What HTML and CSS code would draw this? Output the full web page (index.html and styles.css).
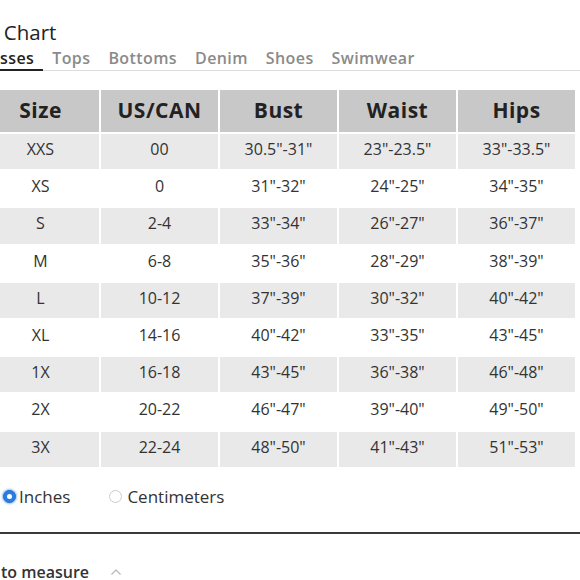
FILE: index.html
```html
<!DOCTYPE html>
<html>
<head>
<meta charset="utf-8">
<link rel="stylesheet" href="styles.css">
</head>
<body>
<div class="page">
  <h1 class="title">Size Chart</h1>
  <nav class="tabs">
    <span class="tab active">Dresses</span>
    <span class="tab">Tops</span>
    <span class="tab">Bottoms</span>
    <span class="tab">Denim</span>
    <span class="tab">Shoes</span>
    <span class="tab">Swimwear</span>
  </nav>
  <table class="chart">
    <thead>
      <tr><th>Size</th><th>US/CAN</th><th>Bust</th><th>Waist</th><th>Hips</th></tr>
    </thead>
    <tbody>
      <tr><td>XXS</td><td>00</td><td>30.5"-31"</td><td>23"-23.5"</td><td>33"-33.5"</td></tr>
      <tr><td>XS</td><td>0</td><td>31"-32"</td><td>24"-25"</td><td>34"-35"</td></tr>
      <tr><td>S</td><td>2-4</td><td>33"-34"</td><td>26"-27"</td><td>36"-37"</td></tr>
      <tr><td>M</td><td>6-8</td><td>35"-36"</td><td>28"-29"</td><td>38"-39"</td></tr>
      <tr><td>L</td><td>10-12</td><td>37"-39"</td><td>30"-32"</td><td>40"-42"</td></tr>
      <tr><td>XL</td><td>14-16</td><td>40"-42"</td><td>33"-35"</td><td>43"-45"</td></tr>
      <tr><td>1X</td><td>16-18</td><td>43"-45"</td><td>36"-38"</td><td>46"-48"</td></tr>
      <tr><td>2X</td><td>20-22</td><td>46"-47"</td><td>39"-40"</td><td>49"-50"</td></tr>
      <tr><td>3X</td><td>22-24</td><td>48"-50"</td><td>41"-43"</td><td>51"-53"</td></tr>
    </tbody>
  </table>
  <div class="units">
    <label class="unit"><span class="radio on"></span>Inches</label>
    <label class="unit"><span class="radio"></span>Centimeters</label>
  </div>
  <div class="measure">
    <span>How to measure</span>
    <svg class="chev" width="12" height="8" viewBox="0 0 12 8"><polyline points="1.5,6.5 6,2 10.5,6.5" fill="none" stroke="#bbb" stroke-width="1.3"/></svg>
  </div>
</div>
</body>
</html>
```
FILE: styles.css
```css
html, body {
  margin: 0;
  padding: 0;
  background: #fff;
  overflow: hidden;
}
body {
  font-family: "Open Sans", "Liberation Sans", sans-serif;
  color: #333;
}
.page {
  margin-left: -36px;
  width: 640px;
}
.title {
  margin: 0 0 0 -3px;
  padding-top: 20px;
  font-size: 20.5px;
  line-height: 24px;
  font-weight: 400;
  color: #222;
}
.tabs {
  display: flex;
  align-items: flex-start;
  border-bottom: 1px solid #ddd;
  width: 616px;
}
.tab {
  padding: 4px 9px 2px;
  font-size: 16px;
  line-height: 20px;
  color: #8a8a8a;
  font-weight: 600;
  letter-spacing: 0.4px;
}
.tab:first-child {
  padding-left: 7px;
}
.tab.active {
  color: #222;
  padding-bottom: 1px;
  border-bottom: 2px solid #222;
  margin-bottom: -1px;
}
.chart {
  margin-top: 17px;
  margin-left: 16px;
  border-collapse: separate;
  border-spacing: 2px;
  table-layout: fixed;
}
.chart th, .chart td {
  width: 117px;
  padding: 0;
  text-align: center;
}
.chart th {
  height: 39px;
  padding-bottom: 3px;
  background: #c8c8c8;
  font-size: 21px;
  font-weight: 700;
  letter-spacing: 0.5px;
  color: #222;
  line-height: 26px;
}
.chart td {
  height: 30.2px;
  padding-bottom: 5px;
  font-size: 16px;
  line-height: 20px;
  color: #333;
}
.chart tbody tr:nth-child(odd) td {
  background: #e9e9e9;
}
.units {
  display: flex;
  align-items: flex-start;
  height: 45px;
  padding-top: 18px;
  padding-left: 39px;
  border-bottom: 2px solid #3a3a3a;
  font-size: 17px;
  line-height: 20px;
  color: #333;
}
.unit {
  display: flex;
  align-items: center;
}
.unit + .unit {
  margin-left: 39px;
}
.radio {
  width: 11px;
  height: 11px;
  border-radius: 50%;
  border: 1px solid #ccc;
  margin-right: 5px;
  box-sizing: content-box;
  position: relative;
}
.radio.on {
  background: #2b7de0;
  border-color: #1f6fd6;
  box-shadow: 0 0 2px 1px rgba(43, 125, 224, 0.5);
  margin-right: 3px;
}
.radio.on::after {
  content: "";
  position: absolute;
  left: 3px;
  top: 3px;
  width: 5px;
  height: 5px;
  border-radius: 50%;
  background: #fff;
}
.measure {
  display: flex;
  align-items: center;
  padding-top: 28px;
  margin-left: -2px;
  font-size: 16px;
  line-height: 20px;
  font-weight: 600;
  color: #333;
}
.chev {
  margin-left: 21px;
}
```
